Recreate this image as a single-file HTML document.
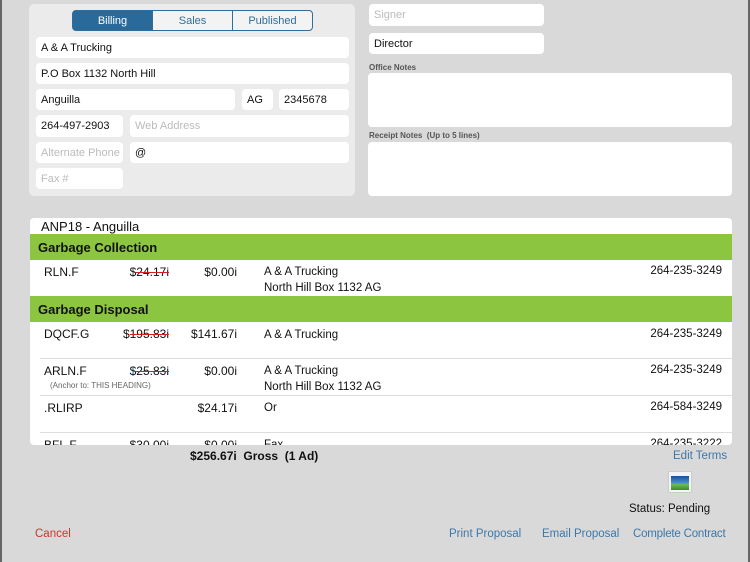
<!DOCTYPE html>
<html><head><style>
body{margin:0;width:750px;height:562px;background:#d9d9d9;font-family:"Liberation Sans",sans-serif;position:relative;overflow:hidden}
.a{position:absolute}
.f{position:absolute;background:#fff;border-radius:4px;font-size:11px;color:#111;box-sizing:border-box;padding-left:5px;display:flex;align-items:center}
.ph{color:#bbb}
.seg{position:absolute;top:10px;height:21px;box-sizing:border-box;border:1px solid #2e6e9e;font-size:11px;color:#2e6e9e;display:flex;align-items:center;justify-content:center;background:#f3f3f3}
.lbl{position:absolute;font-size:8px;font-weight:bold;color:#555}
.g{position:absolute;left:0;right:0;height:26px;background:#8cc540;font-weight:bold;font-size:13px;padding-left:8px;box-sizing:border-box;display:flex;align-items:center;color:#111}
.t{position:absolute;font-size:12px;color:#111}
.s span{position:relative}
.s span::after{content:"";position:absolute;left:0;right:0;top:50%;height:1px;background:#d02020}
.r{text-align:right;width:80px}
.ln{position:absolute;height:1px;background:#ddd;left:10px;right:0}
.ph2{position:absolute;right:10px;font-size:11.5px;color:#111}
.nm{position:absolute;left:234px;font-size:11.5px;line-height:16px;color:#111}
.lk{position:absolute;font-size:11.5px;color:#3d78a8}
</style></head><body>
<div class="a" style="left:0;top:0;width:2px;height:562px;background:#666"></div>
<div class="a" style="left:748px;top:0;width:2px;height:562px;background:#666"></div>
<div class="a" style="left:29px;top:4px;width:326px;height:192px;background:#ebebeb;border-radius:5px"></div>
<div class="seg" style="left:72px;width:81px;background:#2a6a9a;color:#fff;border-radius:4px 0 0 4px">Billing</div>
<div class="seg" style="left:152px;width:81px">Sales</div>
<div class="seg" style="left:232px;width:81px;border-radius:0 4px 4px 0">Published</div>
<div class="f" style="left:36px;top:37px;width:313px;height:21px">A &amp; A Trucking</div>
<div class="f" style="left:36px;top:63px;width:313px;height:21px">P.O Box 1132 North Hill</div>
<div class="f" style="left:36px;top:89px;width:199px;height:21px">Anguilla</div>
<div class="f" style="left:242px;top:89px;width:31px;height:21px">AG</div>
<div class="f" style="left:279px;top:89px;width:70px;height:21px">2345678</div>
<div class="f" style="left:36px;top:115px;width:87px;height:22px">264-497-2903</div>
<div class="f ph" style="left:130px;top:115px;width:219px;height:22px">Web Address</div>
<div class="f ph" style="left:36px;top:142px;width:87px;height:21px">Alternate Phone</div>
<div class="f" style="left:130px;top:142px;width:219px;height:21px">@</div>
<div class="f ph" style="left:36px;top:168px;width:87px;height:21px">Fax #</div>
<div class="f ph" style="left:369px;top:4px;width:175px;height:22px">Signer</div>
<div class="f" style="left:369px;top:33px;width:175px;height:21px">Director</div>
<div class="lbl" style="left:369px;top:63px">Office Notes</div>
<div class="f" style="left:368px;top:73px;width:364px;height:54px"></div>
<div class="lbl" style="left:369px;top:131px">Receipt Notes &nbsp;(Up to 5 lines)</div>
<div class="f" style="left:368px;top:142px;width:364px;height:54px"></div>
<div class="a" style="left:30px;top:218px;width:702px;height:227px;background:#fff;border-radius:4px;overflow:hidden">
 <div class="t" style="left:11px;top:1px;font-size:13px">ANP18 - Anguilla</div>
 <div class="g" style="top:16px">Garbage Collection</div>
 <div class="t" style="left:14px;top:47px">RLN.F</div>
 <div class="t r s" style="left:59px;top:47px">$<span>24.17i</span></div>
 <div class="t r" style="left:127px;top:47px">$0.00i</div>
 <div class="nm" style="top:46px">A &amp; A Trucking<br>North Hill Box 1132 AG</div>
 <div class="ph2" style="top:47px">264-235-3249</div>
 <div class="g" style="top:78px">Garbage Disposal</div>
 <div class="t" style="left:14px;top:109px">DQCF.G</div>
 <div class="t r s" style="left:59px;top:109px">$<span>195.83i</span></div>
 <div class="t r" style="left:127px;top:109px">$141.67i</div>
 <div class="nm" style="top:109px">A &amp; A Trucking</div>
 <div class="ph2" style="top:110px">264-235-3249</div>
 <div class="ln" style="top:140px"></div>
 <div class="t" style="left:14px;top:146px">ARLN.F</div>
 <div class="t" style="left:20px;top:163px;font-size:8px;color:#666">(Anchor to: THIS HEADING)</div>
 <div class="t r s" style="left:59px;top:146px">$<span>25.83i</span></div>
 <div class="t r" style="left:127px;top:146px">$0.00i</div>
 <div class="nm" style="top:145px">A &amp; A Trucking<br>North Hill Box 1132 AG</div>
 <div class="ph2" style="top:146px">264-235-3249</div>
 <div class="ln" style="top:177px"></div>
 <div class="t" style="left:14px;top:183px">.RLIRP</div>
 <div class="t r" style="left:127px;top:183px">$24.17i</div>
 <div class="nm" style="top:182px">Or</div>
 <div class="ph2" style="top:183px">264-584-3249</div>
 <div class="ln" style="top:214px"></div>
 <div class="t" style="left:14px;top:220px">BFL.F</div>
 <div class="t r s" style="left:59px;top:220px">$<span>30.00i</span></div>
 <div class="t r" style="left:127px;top:220px">$0.00i</div>
 <div class="nm" style="top:219px">Fax</div>
 <div class="ph2" style="top:220px">264-235-3222</div>
</div>
<div class="a" style="left:190px;top:449px;font-size:12px;font-weight:bold;color:#111">$256.67i &nbsp;Gross &nbsp;(1 Ad)</div>
<div class="lk" style="left:673px;top:450px">Edit Terms</div>
<div class="a" style="left:668px;top:471px;width:24px;height:22px;background:#f4f4f4;border:1px solid #ccc;box-sizing:border-box">
 <div class="a" style="left:2px;top:4px;width:18px;height:14px;background:linear-gradient(#1d4f9a,#4a8ed0 50%,#6cbf4a 60%,#3c8a2c)"></div>
</div>
<div class="a" style="left:629px;top:503px;font-size:11.5px;color:#111">Status: Pending</div>
<div class="lk" style="left:35px;top:528px;color:#d0342c">Cancel</div>
<div class="lk" style="left:449px;top:528px">Print Proposal</div>
<div class="lk" style="left:542px;top:528px">Email Proposal</div>
<div class="lk" style="left:633px;top:528px;letter-spacing:-0.2px">Complete Contract</div>
</body></html>
